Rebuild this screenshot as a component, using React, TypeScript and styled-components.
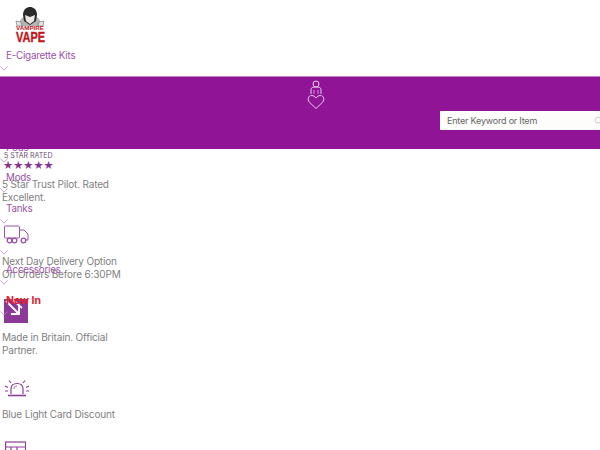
import styled, { createGlobalStyle } from 'styled-components';
import { Search } from 'lucide-react';

const GlobalStyle = createGlobalStyle`
  html, body {
    margin: 0;
    padding: 0;
    background: #fff;
    overflow: hidden;
    height: 450px;
  }
`;

const Page = styled.div`
  position: relative;
  width: 600px;
  height: 450px;
  overflow: hidden;
  font-family: 'Inter', 'Liberation Sans', sans-serif;
`;

const LogoWrap = styled.div`
  padding: 6px 0 0 14px;
  height: 42px;
  display: flex;
`;

const NavList = styled.ul`
  position: relative;
  z-index: 1;
  list-style: none;
  margin: 0;
  padding: 0;
`;

const NavItem = styled.li`
  height: 30.6px;
  display: flex;
  flex-direction: column;
`;

const NavLabel = styled.a<{ $hot?: boolean }>`
  height: 15px;
  padding-left: 6px;
  font-size: ${(p) => (p.$hot ? '10.5px' : '9.8px')};
  line-height: 15px;
  letter-spacing: ${(p) => (p.$hot ? '0' : '-0.2px')};
  font-weight: ${(p) => (p.$hot ? 700 : 400)};
  color: ${(p) => (p.$hot ? '#e2202c' : '#9a52a8')};
`;

const Chevron = styled.svg`
  display: block;
  margin-top: 3px;
  width: 8px;
  height: 5px;
`;

const Bar = styled.header`
  position: absolute;
  z-index: 2;
  top: 76px;
  left: 0;
  right: 0;
  height: 73px;
  box-sizing: border-box;
  border-top: 1px solid #c184c8;
  background: #8f1596;
  display: flex;
  flex-direction: column;
`;

const BarIcons = styled.div`
  display: flex;
  flex-direction: column;
  align-items: center;
  padding: 3px 0 0 32px;
`;

const SearchBox = styled.div`
  margin: 2px -8px 0 auto;
  width: 168px;
  height: 19px;
  box-sizing: border-box;
  background: #fdfdfb;
  display: flex;
  align-items: center;
  justify-content: space-between;
  padding: 0 5px 0 7px;
  font-size: 9px;
  letter-spacing: -0.2px;
  color: #666;
`;

const Features = styled.div`
  position: absolute;
  top: 151px;
  left: 2px;
  width: 120px;
  display: flex;
  flex-direction: column;
`;

const Feature = styled.div<{ $height: number }>`
  height: ${(p) => p.$height}px;
`;

const FeatureText = styled.p`
  margin: 0;
  font-size: 10px;
  line-height: 13px;
  letter-spacing: -0.17px;
  color: #7f7f7f;
`;

const RatedLabel = styled.div`
  font-size: 7px;
  line-height: 10px;
  padding-left: 2px;
  color: #6a4a74;
`;

const Stars = styled.div`
  padding-left: 1px;
  height: 17px;
  font-size: 11.3px;
  line-height: 10px;
  color: #86348f;
  font-family: 'DejaVu Sans', sans-serif;
`;

const IconSlot = styled.div<{ $height: number }>`
  height: ${(p) => p.$height}px;
  padding-left: 2px;
`;

const navItems = ['E-Cigarette Kits', 'E-Liquid', 'Vape Juice', 'Pods', 'Mods', 'Tanks', '', 'Accessories', 'New In'];

function VampireLogo() {
  return (
    <svg width="32" height="42" viewBox="0 0 32 42">
      <path d="M3 20l4-7 4-3h10l4 3 4 7z" fill="#b4b4b4" />
      <path d="M9 9c0-6 4-8 7-8s7 2 7 8l-1 6-6 4-6-4z" fill="#2a2a2a" />
      <path d="M11 9l5 2 5-2-1 6-4 3-4-3z" fill="#ece7e3" />
      <path d="M2 15l5 1 1 4H3zM30 15l-5 1-1 4h5z" fill="#e4e4e4" stroke="#555" strokeWidth="0.5" />
      <text x="16" y="24" textAnchor="middle" fontSize="5" fontWeight="700" fill="#c2161c" fontFamily="'Liberation Sans', sans-serif" textLength="28" lengthAdjust="spacingAndGlyphs">VAMPIRE</text>
      <text x="16.5" y="36" textAnchor="middle" fontSize="15" fontWeight="700" fill="#c2161c" stroke="#c2161c" strokeWidth="0.4" fontFamily="'Liberation Sans', sans-serif" textLength="29" lengthAdjust="spacingAndGlyphs">VAPE</text>
    </svg>
  );
}

function ChevronDown() {
  return (
    <Chevron viewBox="0 0 8 5" fill="none" stroke="#b487bd" strokeWidth="0.8">
      <path d="M0.3 0.5L4 4.2 7.7 0.5" />
    </Chevron>
  );
}

function AccountHeart() {
  return (
    <svg width="18" height="29" viewBox="0 0 18 29" fill="none" stroke="#e8cdea" strokeWidth="1">
      <circle cx="9" cy="4" r="3" />
      <path d="M4 14V9.500C4 7.500 6 7 9 7s5 .5 5 2.500V14" />
      <path d="M7 10v4M11 10v4" strokeWidth="0.7" />
      <path d="M9 28.500l-6.800-6.500C.2 19.600 1.200 15.500 4.600 15.500 6.500 15.500 8 16.600 9 18 10 16.600 11.500 15.500 13.400 15.500c3.400 0 4.400 4.100 2.400 6.500z" />
    </svg>
  );
}

function Truck() {
  return (
    <svg width="25" height="19" viewBox="0 0 25 19" fill="none" stroke="#9a52a8" strokeWidth="1">
      <rect x="0.500" y="1" width="15" height="12" rx="1" />
      <path d="M15.500 5h4.500l4 4v6h-2" />
      <circle cx="5.500" cy="15.500" r="2.300" fill="#fff" strokeWidth="1.300" />
      <circle cx="10.500" cy="15.500" r="2.300" fill="#fff" strokeWidth="1.300" />
      <circle cx="19.500" cy="15.500" r="2.300" fill="#fff" strokeWidth="1.300" />
    </svg>
  );
}

function ArrowBadge() {
  return (
    <svg width="24" height="24" viewBox="0 0 24 24">
      <rect width="24" height="24" fill="#8a3a96" />
      <path d="M2 2L15 15M8 0L18 9" stroke="#fff" strokeWidth="1.800" fill="none" />
      <path d="M15 7v8H7" stroke="#fff" strokeWidth="1.800" fill="none" />
    </svg>
  );
}

function Siren() {
  return (
    <svg width="26" height="21" viewBox="0 -3 26 21" fill="none" stroke="#8e3c9c" strokeWidth="1.200">
      <path d="M7 15V10c0-3.500 2.500-5.500 6-5.500s6 2 6 5.500v5" />
      <path d="M4 16.500h18" strokeWidth="1.600" />
      <path d="M10 10c0-2 1-3 3-3" strokeWidth="0.800" />
      <path d="M1 7l3 1.500M1 12h3M5 1.500L7 4M21 1.500L19 4M25 7l-3 1.500M25 12h-3" />
    </svg>
  );
}

function CardIcon() {
  return (
    <svg width="24" height="16" viewBox="0 0 24 16" fill="none" stroke="#8e3c9c" strokeWidth="1.200">
      <rect x="3.600" y="1" width="20" height="15" />
      <path d="M3.600 6h20M9 6v10M15 6v10" />
    </svg>
  );
}

export default function App() {
  return (
    <>
      <GlobalStyle />
      <Page>
        <LogoWrap>
          <VampireLogo />
        </LogoWrap>
        <NavList>
          {navItems.map((item, i) => (
            <NavItem key={i}>
              <NavLabel $hot={item === 'New In'}>{item}</NavLabel>
              <ChevronDown />
            </NavItem>
          ))}
        </NavList>
        <Bar>
          <BarIcons>
            <AccountHeart />
          </BarIcons>
          <SearchBox>
            Enter Keyword or Item
            <Search size={9} color="#bbb" />
          </SearchBox>
        </Bar>
        <Features>
          <Feature $height={74}>
            <RatedLabel>5 STAR RATED</RatedLabel>
            <Stars>★★★★★</Stars>
            <FeatureText>5 Star Trust Pilot. Rated Excellent.</FeatureText>
          </Feature>
          <Feature $height={74}>
            <IconSlot $height={30}>
              <Truck />
            </IconSlot>
            <FeatureText>Next Day Delivery Option On Orders Before 6:30PM</FeatureText>
          </Feature>
          <Feature $height={77}>
            <IconSlot $height={32}>
              <ArrowBadge />
            </IconSlot>
            <FeatureText>Made in Britain. Official Partner.</FeatureText>
          </Feature>
          <Feature $height={65}>
            <IconSlot $height={32}>
              <Siren />
            </IconSlot>
            <FeatureText>Blue Light Card Discount</FeatureText>
          </Feature>
          <CardIcon />
        </Features>
      </Page>
    </>
  );
}
